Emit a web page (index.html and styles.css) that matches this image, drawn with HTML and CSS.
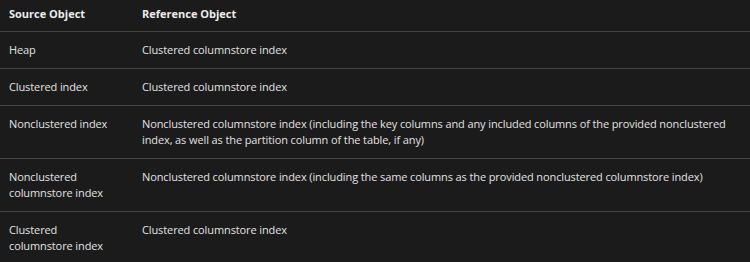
FILE: index.html
```html
<!DOCTYPE html>
<html>
<head>
<meta charset="utf-8">
<link rel="stylesheet" href="styles.css">
</head>
<body>
<table class="grid">
  <thead>
    <tr><th class="c1">Source Object</th><th class="c2">Reference Object</th></tr>
  </thead>
  <tbody>
    <tr><td class="c1">Heap</td><td class="c2">Clustered columnstore index</td></tr>
    <tr><td class="c1">Clustered index</td><td class="c2">Clustered columnstore index</td></tr>
    <tr><td class="c1">Nonclustered index</td><td class="c2">Nonclustered columnstore index (including the key columns and any included columns of the provided nonclustered index, as well as the partition column of the table, if any)</td></tr>
    <tr><td class="c1">Nonclustered columnstore index</td><td class="c2">Nonclustered columnstore index (including the same columns as the provided nonclustered columnstore index)</td></tr>
    <tr><td class="c1">Clustered columnstore index</td><td class="c2">Clustered columnstore index</td></tr>
  </tbody>
</table>
</body>
</html>
```
FILE: styles.css
```css
html, body {
  margin: 0;
  padding: 0;
  background: #1b1b1b;
}
body {
  font-family: "Open Sans", "Noto Sans", sans-serif;
  font-size: 11px;
  line-height: 16px;
  color: #e2e2e2;
  width: 750px;
  height: 262px;
  overflow: hidden;
}
.grid {
  width: 750px;
  border-collapse: collapse;
  table-layout: fixed;
}
.grid th {
  text-align: left;
  font-weight: 700;
  padding: 6px 9px 9px 9px;
  vertical-align: top;
  color: #ececec;
}
.grid td {
  padding: 10px 9px 10px 9px;
  vertical-align: top;
  border-top: 1px solid #444444;
  letter-spacing: -0.11px;
}
.grid .c1 {
  width: 105px;
  padding-right: 19px;
}
.c2 {
  padding-left: 9px;
}
```
